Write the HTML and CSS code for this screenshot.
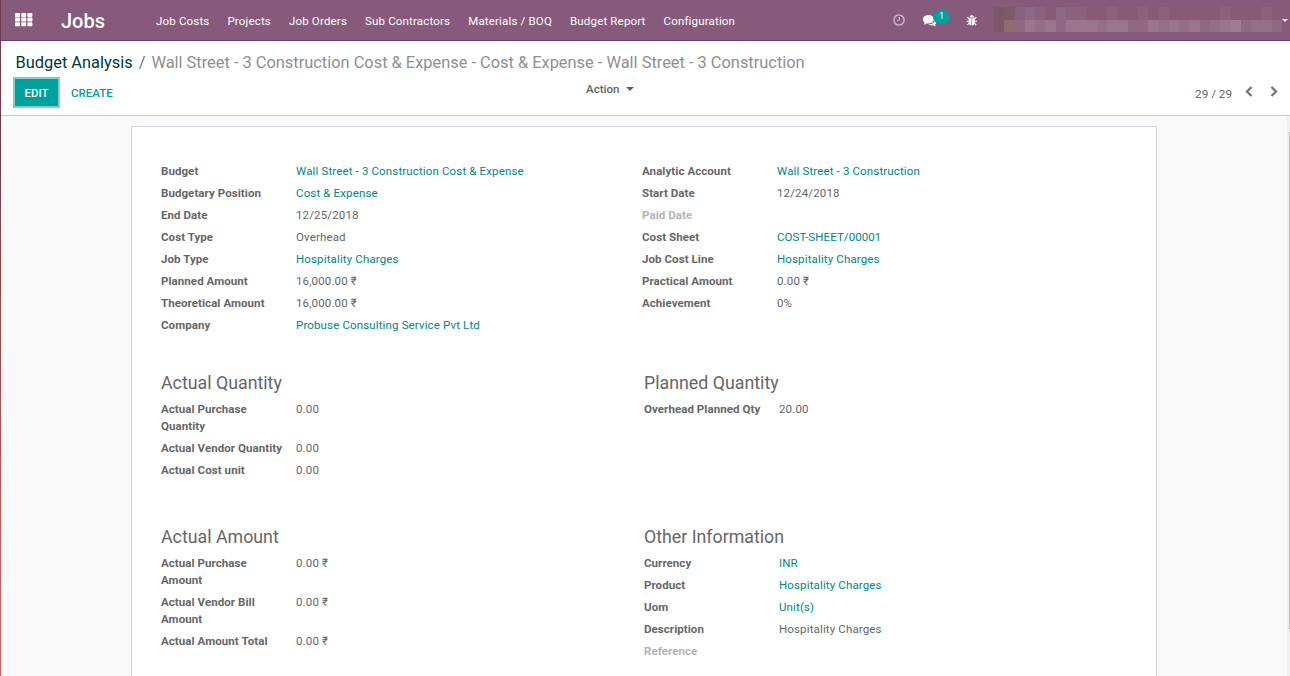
FILE: index.html
```
<!DOCTYPE html>
<html lang="en">
<head>
<meta charset="utf-8">
<title>Jobs</title>
<link rel="stylesheet" href="styles.css">
</head>
<body>
<header class="navbar">
  <svg class="apps" width="18" height="14" viewBox="0 0 18 14" fill="#fff"><rect width="5" height="4" rx=".7"/><rect x="6.2" width="5" height="4" rx=".7"/><rect x="12.4" width="5" height="4" rx=".7"/><rect y="4.6" width="5" height="4" rx=".7"/><rect x="6.2" y="4.6" width="5" height="4" rx=".7"/><rect x="12.4" y="4.6" width="5" height="4" rx=".7"/><rect y="9.2" width="5" height="4" rx=".7"/><rect x="6.2" y="9.2" width="5" height="4" rx=".7"/><rect x="12.4" y="9.2" width="5" height="4" rx=".7"/></svg>
  <span class="brand">Jobs</span>
  <nav class="menu"><a>Job Costs</a><a>Projects</a><a>Job Orders</a><a>Sub Contractors</a><a>Materials / BOQ</a><a>Budget Report</a><a>Configuration</a></nav>
  <div class="systray">
    <svg class="clock" width="12" height="12" viewBox="0 0 12 12" fill="none" stroke="#c9b3c1"><circle cx="6" cy="6" r="5.1" stroke-width="1.5"/><path d="M6.3 3v3.4H4" stroke-width="1"/></svg>
    <span class="chat"><svg width="14" height="12" viewBox="0 0 14 12" fill="#fff"><path d="M5.5 0C8.6 0 11 1.9 11 4.2S8.6 8.4 5.5 8.4c-.6 0-1.100 0-1.600-.2C2.800 9 1.700 9.400.6 9.500c.7-.6 1.100-1.200 1.200-2C.7 6.700 0 5.500 0 4.200 0 1.900 2.400 0 5.500 0z"/><path d="M12 4.300c.9.700 1.400 1.600 1.400 2.600 0 1.100-.6 2-1.500 2.700.1.600.5 1.100 1.100 1.700-1.100-.1-2-.5-2.900-1.100-1.700.3-3.400 0-4.700-.8C8.900 9.600 11.800 7.300 12 4.300z"/></svg><span class="badge">1</span></span>
    <svg class="bug" width="12" height="11" viewBox="0 0 12 11" fill="#fff"><path d="M3.600 2.500a2.200 2.300 0 0 1 4.400 0z"/><path d="M2.800 3.200h2.700v7.300C3.800 10.300 2.800 9 2.800 7.200zM6.100 3.200h2.700v4c0 1.800-1 3.100-2.700 3.300z"/><path d="M1.300 2.200l2 1.800M10.300 2.200l-2 1.800M.6 6.200h2.500M8.500 6.200H11M1.400 9.800l2-1.800M10.200 9.800l-2-1.800" stroke="#fff" stroke-width="1.100"/></svg>
    <svg class="user" width="288" height="25" viewBox="0 0 28 2" preserveAspectRatio="none" shape-rendering="crispEdges">
      <path fill="#7f5569" d="M0 0h1v2H0z"/><path fill="#7d5a68" d="M1 0h1v1H1z"/><path fill="#8f6c70" d="M1 1h1v1H1z"/>
      <path fill="#8d627f" d="M2 0h1v1H2zM4 0h1v1H4zM7 0h2v1H7zM11 0h1v1H11zM14 0h1v1H14zM16 0h1v1H16zM22 0h1v1H22zM26 0h1v1H26z"/>
      <path fill="#916985" d="M3 0h1v1H3zM6 0h1v1H6z"/>
      <path fill="#895b78" d="M5 0h1v1H5zM9 0h2v1H9zM12 0h2v1H12zM15 0h1v1H15zM17 0h5v1H17zM23 0h3v1H23zM27 0h1v1H27z"/>
      <path fill="#936a86" d="M2 1h1v1H2zM6 1h1v1H6zM13 1h2v1H13zM20 1h1v1H20zM24 1h1v1H24zM27 1h1v1H27z"/>
      <path fill="#9d7890" d="M3 1h1v1H3zM5 1h1v1H5zM7 1h3v1H7zM11 1h2v1H11zM15 1h1v1H15zM17 1h1v1H17zM19 1h1v1H19zM22 1h1v1H22z"/>
      <path fill="#97718a" d="M4 1h1v1H4zM10 1h1v1H10zM16 1h1v1H16zM18 1h1v1H18zM21 1h1v1H21zM25 1h2v1H25z"/><path fill="#a37f95" d="M23 1h1v1H23z"/>
    </svg>
    <i class="caret"></i>
  </div>
</header>
<section class="control">
  <div class="crumbs"><a>Budget Analysis</a><span class="slash">/</span><span class="current">Wall Street - 3 Construction Cost &amp; Expense - Cost &amp; Expense - Wall Street - 3 Construction</span></div>
  <div class="actions">
    <div class="buttons"><button class="edit">EDIT</button><button class="create">CREATE</button></div>
    <div class="action">Action<i class="caret"></i></div>
    <div class="pager"><span>29 / 29</span>
      <svg width="8" height="11" viewBox="0 0 8 11"><path d="M6.500 1L2 5.500 6.500 10" fill="none" stroke="#6c757d" stroke-width="2.300"/></svg>
      <svg width="8" height="11" viewBox="0 0 8 11"><path d="M1.500 1L6 5.500 1.500 10" fill="none" stroke="#6c757d" stroke-width="2.300"/></svg>
    </div>
  </div>
</section>
<main class="content">
  <div class="sheet">
    <div class="group first">
      <dl class="fields">
        <dt>Budget</dt><dd class="link">Wall Street - 3 Construction Cost &amp; Expense</dd>
        <dt>Budgetary Position</dt><dd class="link">Cost &amp; Expense</dd>
        <dt>End Date</dt><dd>12/25/2018</dd>
        <dt>Cost Type</dt><dd>Overhead</dd>
        <dt>Job Type</dt><dd class="link">Hospitality Charges</dd>
        <dt>Planned Amount</dt><dd>16,000.00 ₹</dd>
        <dt>Theoretical Amount</dt><dd>16,000.00 ₹</dd>
        <dt>Company</dt><dd class="link">Probuse Consulting Service Pvt Ltd</dd>
      </dl>
      <dl class="fields">
        <dt>Analytic Account</dt><dd class="link">Wall Street - 3 Construction</dd>
        <dt>Start Date</dt><dd>12/24/2018</dd>
        <dt class="empty">Paid Date</dt><dd></dd>
        <dt>Cost Sheet</dt><dd class="link code">COST-SHEET/00001</dd>
        <dt>Job Cost Line</dt><dd class="link">Hospitality Charges</dd>
        <dt>Practical Amount</dt><dd>0.00 ₹</dd>
        <dt>Achievement</dt><dd>0%</dd>
      </dl>
    </div>
    <div class="group">
      <section><h2>Actual Quantity</h2>
        <dl class="fields">
          <dt>Actual Purchase<br>Quantity</dt><dd>0.00</dd>
          <dt>Actual Vendor Quantity</dt><dd>0.00</dd>
          <dt>Actual Cost unit</dt><dd>0.00</dd>
        </dl>
      </section>
      <section><h2>Planned Quantity</h2>
        <dl class="fields"><dt>Overhead Planned Qty</dt><dd>20.00</dd></dl>
      </section>
    </div>
    <div class="group last">
      <section><h2>Actual Amount</h2>
        <dl class="fields">
          <dt>Actual Purchase<br>Amount</dt><dd>0.00 ₹</dd>
          <dt>Actual Vendor Bill<br>Amount</dt><dd>0.00 ₹</dd>
          <dt>Actual Amount Total</dt><dd>0.00 ₹</dd>
        </dl>
      </section>
      <section><h2>Other Information</h2>
        <dl class="fields">
          <dt>Currency</dt><dd class="link">INR</dd>
          <dt>Product</dt><dd class="link">Hospitality Charges</dd>
          <dt>Uom</dt><dd class="link">Unit(s)</dd>
          <dt>Description</dt><dd>Hospitality Charges</dd>
          <dt class="empty">Reference</dt><dd></dd>
        </dl>
      </section>
    </div>
  </div>
  <div class="scrollbar"><div class="thumb"></div></div>
</main>
</body>
</html>
```
FILE: styles.css
```
* { box-sizing: border-box; }
body {
  margin: 0;
  height: 676px;
  overflow: hidden;
  display: flex;
  flex-direction: column;
  padding-left: 1px;
  font: 11.5px/17px Roboto, "Noto Sans", sans-serif;
  color: #666;
  background: linear-gradient(#6d3b4d 0, #6d3b4d 120px, #c2655c 600px) 0 0 / 1px 100% no-repeat #fff;
}
.navbar {
  display: flex;
  align-items: flex-start;
  height: 41px;
  flex: none;
  background: #875a7b;
  border-bottom: 1px solid #68465f;
  color: #fff;
}
.apps { margin: 13px 0 0 14px; }
.brand { width: 95px; margin: 9px 0 0 28px; font-size: 20px; line-height: 24px; font-weight: 500; letter-spacing: 0; }
.menu { display: flex; gap: 18px; margin-top: 13px; white-space: nowrap; letter-spacing: .17px; }
.systray { display: flex; margin-left: auto; }
.clock { margin: 14px 1px 0 0; }
.chat { position: relative; width: 27px; margin: 15px 0 0 17px; }
.chat svg { display: block; }
.badge {
  position: absolute;
  left: 10px;
  top: -5px;
  width: 17px;
  height: 14px;
  border-radius: 7px;
  background: #00a09d;
  font-size: 9px;
  line-height: 13px;
  text-align: center;
}
.bug { margin: 15px 0 0 16px; }
.user { margin: 7px 0 0 16px; opacity: .9; }
.caret { border: 3px solid transparent; border-top-color: currentColor; border-bottom: 0; }
.systray .caret { margin: 19px 2px 0 0; }
.control { height: 75px; flex: none; border-bottom: 1px solid #ccc; }
.crumbs { padding: 11px 0 0 14.5px; font-size: 16.4px; line-height: 22px; white-space: nowrap; }
.crumbs a { color: #00383a; }
.slash { margin: 0 6px; color: #6c757d; }
.current { color: #8f8f8f; }
.actions { display: grid; grid-template-columns: 585px 1fr auto; padding: 3px 12px 0 12px; }
.buttons { display: flex; }
.actions button { font: 500 11.5px/17px Roboto, sans-serif; border: 0; padding: 1px 0 0; background: none; color: #00a09d; height: 31px; }
.actions .edit { width: 47px; color: #fff; background: #00a09d; border: 2px solid #80cfce; }
.create { margin-left: 11px; }
.action { font-weight: 500; margin: 4px 0 0 -12px; color: #5f5f5f; display: flex; }
.action .caret { margin: 6px 0 0 7px; border-width: 4px 4px 0; }
.pager { display: flex; height: 17px; margin-top: 9px; font-size: 11.7px; }
.pager svg { margin-left: 13px; }
.pager svg + svg { margin-left: 17px; }
.content { flex: 1; min-height: 0; display: flex; padding-top: 10px; padding-left: 130px; background: #f9f9f9; }
.sheet { width: 1026px; flex: none; padding: 36px 29px 0; background: #fff; border: 1px solid #ced4da; border-bottom: 0; }
.group { display: grid; grid-template-columns: 483px 483px; height: 154px; }
.first { grid-template-columns: 481px 485px; height: 207px; }
.last { height: auto; }
.fields { display: grid; grid-template-columns: 135px 1fr; row-gap: 5px; margin: 0; align-content: start; white-space: nowrap; }
.fields dt { font-weight: 700; letter-spacing: .07px; }
.fields dd { margin: 0; min-height: 17px; letter-spacing: .14px; }
.fields .link { color: #008784; }
.fields .code { letter-spacing: .08px; }
.fields .empty { color: #b3b3b3; }
h2 { margin: 0 0 6px; font-size: 17.8px; line-height: 25px; font-weight: 400; }
.scrollbar { width: 3px; margin: -10px 0 0 auto; padding: 16px 0 47px 2px; background: #f0f0f0; }
.thumb { height: 100%; background: #c1c1c1; }
```
